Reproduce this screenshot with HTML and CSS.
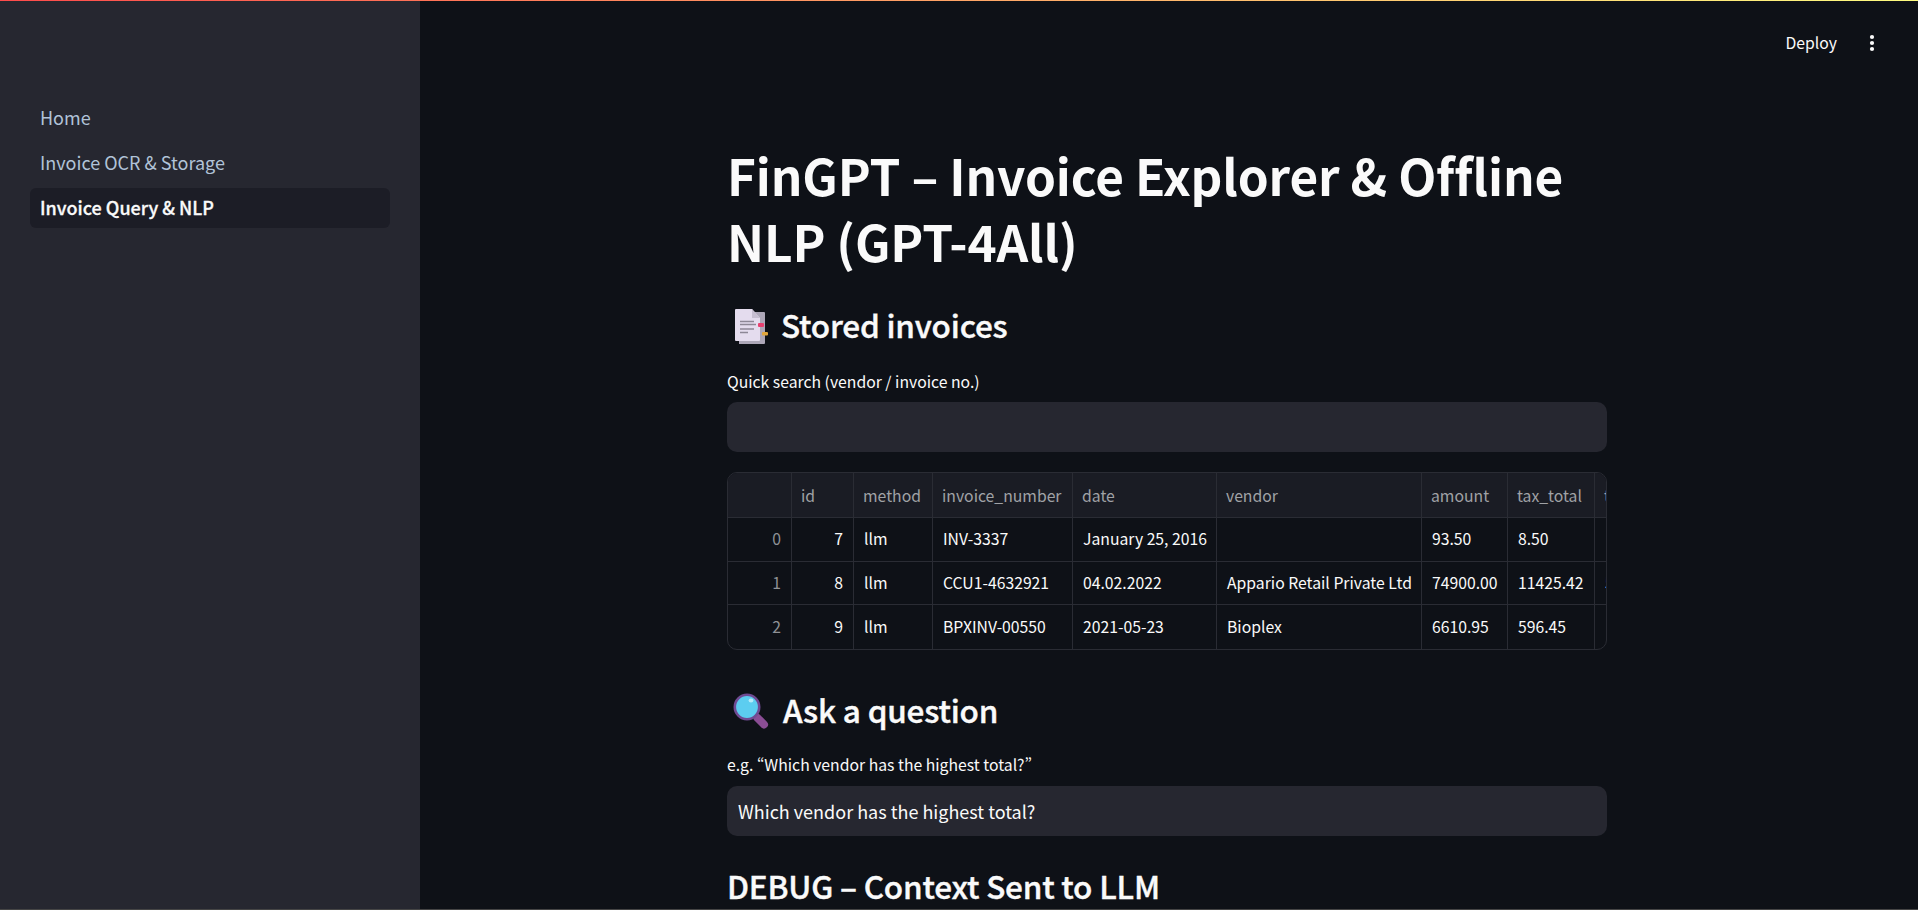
FILE: index.html
```html
<!DOCTYPE html>
<html>
  <head>
    <meta charset="utf-8">
    <link rel="stylesheet" href="styles.css">
    <title>FinGPT</title>
  </head>
  <body>
    <div class="topline"></div>
    <div class="app">
      <nav class="sidebar">
        <a class="navlink">Home</a>
        <a class="navlink">Invoice OCR &amp; Storage</a>
        <a class="navlink active">Invoice Query &amp; NLP</a>
      </nav>
      <main class="main">
        <header class="toolbar">
          <span class="deploy">Deploy</span>
          <svg class="dots" width="6" height="18" viewBox="0 0 6 18"><circle cx="3" cy="3" r="2.1"/><circle cx="3" cy="9" r="2.1"/><circle cx="3" cy="15" r="2.1"/></svg>
        </header>
        <div class="content">
          <h1>FinGPT – Invoice Explorer &amp; Offline NLP (GPT-4All)</h1>
          <h3 class="first">
            <svg class="emoji" width="36" height="36" viewBox="0 0 36 36">
              <path d="M6 4h25a1 1 0 0 1 1 1v30a1 1 0 0 1-1 1H6z" fill="#ada7b8"/>
              <path d="M2 2a1 1 0 0 1 1-1h16l8 9v22a1 1 0 0 1-1 1H3a1 1 0 0 1-1-1z" fill="#e4dcee"/>
              <path d="M19 1l8 9h-8z" fill="#c6bed1"/>
              <path d="M7 13.5h14M7 16.5h16M7 21h14M7 24.5h8" stroke="#8d8796" stroke-width="1.4"/>
              <rect x="25" y="15" width="6" height="4" rx="1" fill="#e8406f"/>
              <rect x="29" y="24" width="6" height="3.4" rx="1" fill="#e0a63c"/>
            </svg>
            Stored invoices
          </h3>
          <label class="label">Quick search (vendor / invoice no.)</label>
          <div class="input"></div>
          <div class="tablewrap">
            <table>
              <colgroup>
                <col class="c-idx"><col class="c-id"><col class="c-method"><col class="c-number"><col class="c-date"><col class="c-vendor"><col class="c-amount"><col class="c-tax"><col class="c-total">
              </colgroup>
              <thead>
                <tr><th></th><th>id</th><th>method</th><th>invoice_number</th><th>date</th><th>vendor</th><th>amount</th><th>tax_total</th><th>total</th></tr>
              </thead>
              <tbody>
                <tr><td class="idx">0</td><td class="num">7</td><td>llm</td><td>INV-3337</td><td>January 25, 2016</td><td></td><td>93.50</td><td>8.50</td><td></td></tr>
                <tr><td class="idx">1</td><td class="num">8</td><td>llm</td><td>CCU1-4632921</td><td>04.02.2022</td><td>Appario Retail Private Ltd</td><td>74900.00</td><td>11425.42</td><td class="linkcell">5</td></tr>
                <tr><td class="idx">2</td><td class="num">9</td><td>llm</td><td>BPXINV-00550</td><td>2021-05-23</td><td>Bioplex</td><td>6610.95</td><td>596.45</td><td></td></tr>
              </tbody>
            </table>
          </div>
          <h3 class="second">
            <svg class="emoji" width="38" height="36" viewBox="0 0 38 36">
              <path d="M24.5 25l6.5 6.5" stroke="#8a4d94" stroke-width="8" stroke-linecap="round"/>
              <circle cx="14" cy="14" r="12.2" fill="#5ccdf0" stroke="#6f4b93" stroke-width="2.6"/>
              <ellipse cx="18" cy="7.5" rx="2.4" ry="2" fill="#b5ecfa"/>
            </svg>
            Ask a question
          </h3>
          <label class="label">e.g. “Which vendor has the highest total?”</label>
          <div class="input">Which vendor has the highest total?</div>
          <h3 class="third">DEBUG – Context Sent to LLM</h3>
        </div>
      </main>
    </div>
  </body>
</html>
```

FILE: styles.css
```css
html, body {
  margin: 0;
  height: 100%;
  overflow: hidden;
  background: #0e1117;
}
body {
  font-family: "Noto Sans CJK SC", "Noto Sans", sans-serif;
  font-feature-settings: "pwid";
  color: #fafafa;
  position: relative;
}

.topline {
  position: absolute;
  top: 0;
  left: 0;
  right: 0;
  height: 1px;
  background: linear-gradient(90deg, #ff4b4b, #fffd80);
  z-index: 2;
}

.app {
  display: flex;
  height: 910px;
  box-sizing: border-box;
  border-bottom: 1px solid #454545;
}

.sidebar {
  width: 420px;
  flex: none;
  background: #262730;
  box-sizing: border-box;
  padding: 98px 30px 0 30px;
  display: flex;
  flex-direction: column;
  gap: 5px;
}
.navlink {
  height: 40px;
  line-height: 38px;
  padding-left: 10px;
  border-radius: 6px;
  font-size: 18px;
  color: #b1c3d8;
}
.navlink.active {
  background: #1c1d26;
  color: #fafafa;
  font-weight: 500;
  -webkit-text-stroke: 0.3px #fafafa;
}

.main {
  flex: 1;
  min-width: 0;
  padding-right: 4px;
}
.toolbar {
  display: flex;
  justify-content: flex-end;
  align-items: center;
  height: 42px;
  padding-top: 22px;
  padding-right: 39px;
  gap: 32px;
}
.deploy {
  font-size: 15.75px;
  line-height: 22px;
}
.dots {
  fill: #fafafa;
}

.content {
  width: 880px;
  margin: 0 auto;
  padding-top: 78px;
}

h1 {
  margin: 0;
  font-size: 49.5px;
  line-height: 66px;
  font-weight: 700;
  letter-spacing: -0.15px;
}
h3 {
  margin: 0;
  font-size: 31.5px;
  line-height: 46px;
  font-weight: 500;
  letter-spacing: -0.2px;
  -webkit-text-stroke: 0.4px #fafafa;
  display: flex;
  align-items: center;
  gap: 12px;
}
h3.first {
  margin-top: 27px;
  margin-left: 6px;
}
h3.second {
  margin-top: 36px;
  margin-left: 6px;
}
h3.third {
  margin-top: 26px;
}
.emoji {
  margin-top: 3px;
}

.label {
  display: block;
  font-size: 15.75px;
  line-height: 22px;
  margin-top: 24px;
  margin-bottom: 9px;
}
h3.second + .label {
  margin-top: 22px;
  margin-bottom: 10px;
}
.input {
  height: 50px;
  line-height: 50px;
  background: #262730;
  border-radius: 10px;
  padding-left: 11px;
  font-size: 18px;
}

.tablewrap {
  margin-top: 20px;
  height: 178px;
  box-sizing: border-box;
  border: 1px solid #2a2c34;
  border-radius: 10px;
  overflow: hidden;
}
table {
  border-collapse: separate;
  border-spacing: 0;
  table-layout: fixed;
  width: 927px;
  font-size: 15.75px;
}
.c-idx { width: 64px; }
.c-id { width: 62px; }
.c-method { width: 79px; }
.c-number { width: 140px; }
.c-date { width: 144px; }
.c-vendor { width: 205px; }
.c-amount { width: 86px; }
.c-tax { width: 87px; }
.c-total { width: 60px; }

th, td {
  box-sizing: border-box;
  border-right: 1px solid #2a2c34;
  border-bottom: 1px solid #2a2c34;
  padding: 0 10px;
  height: 44px;
  font-weight: 400;
  text-align: left;
  white-space: nowrap;
  overflow: hidden;
}
th {
  background: #1a1c24;
  color: #a0a2a6;
  height: 45px;
  padding-left: 9px;
}
tbody tr:nth-child(2) td {
  height: 43px;
}
tbody tr:last-child td {
  border-bottom: 0;
}
td {
  line-height: 20px;
  padding-bottom: 1px;
}
td.idx {
  text-align: right;
  color: #8f9196;
}
td.num {
  text-align: right;
}
td.linkcell {
  color: #9fd4f0;
}
```
